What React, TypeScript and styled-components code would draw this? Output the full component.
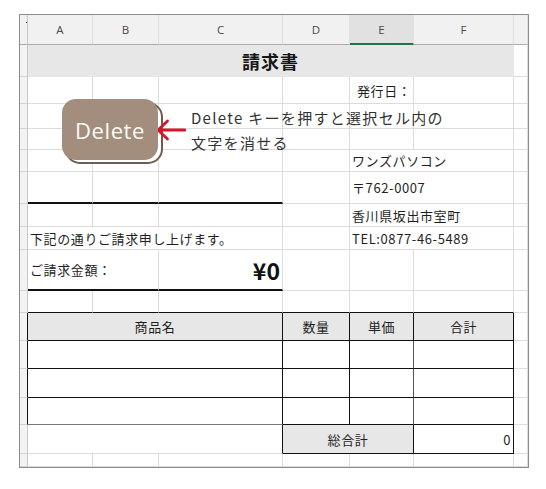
import React from "react";
import styled, { createGlobalStyle } from "styled-components";

const GRID = "#dcdcdc";
const INK = "#1f1f1f";
const SHADE = "#e7e7e7";
const JP = `"Noto Sans CJK JP", "Noto Sans", sans-serif`;

const COLS = [8, 65, 66, 124, 67, 64, 100, 14];
const ROWS = [30, 32, 27, 25, 21, 22, 32, 23, 23, 41, 22, 28, 28, 29, 27, 29, 13];
const LETTERS = ["A", "B", "C", "D", "E", "F", ""];

const GlobalStyle = createGlobalStyle`
    html, body {
        margin: 0;
        background: #ffffff;
    }
`;

const Page = styled.div`
    padding: 14px 0 0 19px;
`;

const Frame = styled.div`
    position: relative;
    width: fit-content;
    border: 1px solid #8c8c8c;
    overflow: hidden;
`;

const Sheet = styled.div`
    display: grid;
    grid-template-columns: ${COLS.map((c) => `${c}px`).join(" ")};
    grid-template-rows: ${ROWS.map((r) => `${r}px`).join(" ")};
    font-family: ${JP};
    font-size: 13px;
    color: ${INK};
`;

const ColHead = styled.div<{ $active?: boolean }>`
    display: flex;
    align-items: center;
    justify-content: center;
    background: ${(p) => (p.$active ? "#e1e1e1" : "#f1f1f1")};
    border-right: 1px solid ${(p) => (p.$active ? "#e1e1e1" : "#dedede")};
    border-bottom: ${(p) => (p.$active ? "2px solid #217346" : "1px solid #ababab")};
    font-family: "Open Sans", "Noto Sans", sans-serif;
    font-size: 11.5px;
    color: #4a4a4a;
`;

const Corner = styled.div`
    position: relative;
    background: #f1f1f1;
    border-right: 1px solid #c8c8c8;
    border-bottom: 1px solid #ababab;

    &::after {
        content: "";
        position: absolute;
        right: 0;
        top: 7px;
        width: 1px;
        height: 1px;
        background: #333;
    }
`;

const RowHead = styled.div<{ $edge?: string }>`
    background: #f3f3f3;
    border-right: 1px solid ${(p) => p.$edge ?? "#c8c8c8"};
    border-bottom: 1px solid #d4d4d4;
`;

interface ICellProps {
    $span?: number;
    $bg?: string;
    $align?: "flex-start" | "center" | "flex-end";
    $right?: string;
    $bottom?: string;
    $pad?: number;
}

const Cell = styled.div<ICellProps>`
    grid-column: span ${(p) => p.$span ?? 1};
    display: flex;
    align-items: center;
    justify-content: ${(p) => p.$align ?? "flex-start"};
    padding: 0 ${(p) => p.$pad ?? 2}px;
    background: ${(p) => p.$bg ?? "transparent"};
    border-right: 1px solid ${(p) => p.$right ?? GRID};
    border-bottom: ${(p) => p.$bottom ?? `1px solid ${GRID}`};
    white-space: nowrap;
    overflow: hidden;
    letter-spacing: 0.6px;
`;

const Title = styled(Cell)`
    font-size: 18px;
    font-weight: 700;
    letter-spacing: 1px;
    color: #161616;
`;

const Amount = styled(Cell)`
    font-size: 23px;
    font-weight: 700;
    letter-spacing: 0;
    color: #111;
`;

const Callout = styled.div`
    position: absolute;
    z-index: 1;
    left: 42px;
    top: 84px;
    display: flex;
    align-items: center;
`;

const Key = styled.div`
    position: relative;
    width: 96px;
    height: 61px;
    display: flex;
    align-items: center;
    justify-content: center;
    border-radius: 14px;
    background: #a38e7d;
    color: #fdfaf5;
    font-family: "Open Sans", "Noto Sans", sans-serif;
    font-size: 22px;
    letter-spacing: 0.6px;

    &::before {
        content: "";
        position: absolute;
        inset: 3px -5px -4px 3px;
        border: 2px solid #6f5e4f;
        border-radius: 15px;
        background: #ffffff;
        z-index: -1;
    }
`;

const Note = styled.div`
    margin-left: 5px;
    font-family: ${JP};
    font-size: 15px;
    line-height: 25px;
    color: #333;
    letter-spacing: 1.3px;
`;

const Arrow = () => (
    <svg width="30" height="22" viewBox="0 0 30 22" style={{ marginLeft: -2 }}>
        <g fill="none" stroke="#d4162a" strokeWidth="2.8" strokeLinecap="round" strokeLinejoin="round">
            <path d="M2 11 H29" />
            <path d="M11.5 2 L2 11 L11.5 20" />
        </g>
    </svg>
);

const BLACK = "#111";
const THICK = `2px solid ${BLACK}`;
const LINE = `1px solid ${BLACK}`;

const blanks = (n: number, props: ICellProps = {}) =>
    Array.from({ length: n }, (_, i) => <Cell key={`b${i}`} {...props} />);

export default function App() {
    return (
        <>
            <GlobalStyle />
            <Page>
                <Frame>
                    <Sheet>
                        {/* column headings */}
                        <Corner />
                        {LETTERS.map((l) => (
                            <ColHead key={l || "g"} $active={l === "E"}>{l}</ColHead>
                        ))}

                        {/* 1: title */}
                        <RowHead />
                        <Title $span={6} $bg={SHADE} $align="center" $right={SHADE} $bottom={`1px solid ${SHADE}`}>請求書</Title>
                        <Cell />

                        {/* 2 */}
                        <RowHead />
                        {blanks(4)}
                        <Cell $pad={7}>発行日：</Cell>
                        <Cell />
                        <Cell />

                        {/* 3, 4 */}
                        <RowHead />
                        {blanks(7)}
                        <RowHead />
                        {blanks(7)}

                        {/* 5 */}
                        <RowHead />
                        {blanks(4)}
                        <Cell $span={2}>ワンズパソコン</Cell>
                        <Cell />

                        {/* 6 */}
                        <RowHead />
                        <Cell $bottom={THICK} />
                        <Cell $bottom={THICK} />
                        <Cell $bottom={THICK} />
                        <Cell />
                        <Cell $span={2}>〒762-0007</Cell>
                        <Cell />

                        {/* 7 */}
                        <RowHead />
                        {blanks(4)}
                        <Cell $span={2}>香川県坂出市室町</Cell>
                        <Cell />

                        {/* 8 */}
                        <RowHead />
                        <Cell $span={3}>下記の通りご請求申し上げます。</Cell>
                        <Cell />
                        <Cell $span={2}>TEL:0877-46-5489</Cell>
                        <Cell />

                        {/* 9 */}
                        <RowHead />
                        <Cell $span={2} $bottom={THICK}>ご請求金額：</Cell>
                        <Amount $align="flex-end" $bottom={THICK}>¥0</Amount>
                        {blanks(4)}

                        {/* 10 */}
                        <RowHead />
                        {blanks(6, { $bottom: LINE })}
                        <Cell />

                        {/* 11: table heading */}
                        <RowHead $edge={BLACK} />
                        <Cell $span={3} $bg={SHADE} $align="center" $right={BLACK} $bottom={LINE}>商品名</Cell>
                        <Cell $bg={SHADE} $align="center" $right={BLACK} $bottom={LINE}>数量</Cell>
                        <Cell $bg={SHADE} $align="center" $right={BLACK} $bottom={LINE}>単価</Cell>
                        <Cell $bg={SHADE} $align="center" $right={BLACK} $bottom={LINE}>合計</Cell>
                        <Cell />

                        {/* 12 - 14: item rows */}
                        {[0, 1, 2].map((r) => (
                            <React.Fragment key={r}>
                                <RowHead $edge={BLACK} />
                                <Cell $span={3} $right={BLACK} $bottom={r === 2 ? "1px solid #777" : LINE} />
                                <Cell $right={BLACK} $bottom={LINE} />
                                <Cell $right="#555" $bottom={LINE} />
                                <Cell $right={BLACK} $bottom={LINE} />
                                <Cell />
                            </React.Fragment>
                        ))}

                        {/* 15: total */}
                        <RowHead />
                        <Cell $span={3} $right={BLACK} />
                        <Cell $span={2} $bg={SHADE} $align="center" $right={BLACK} $bottom={LINE}>総合計</Cell>
                        <Cell $align="flex-end" $right={BLACK} $bottom={LINE}>0</Cell>
                        <Cell />

                        {/* 16 */}
                        <RowHead />
                        {blanks(7)}
                    </Sheet>

                    <Callout>
                        <Key>Delete</Key>
                        <Arrow />
                        <Note>
                            Delete キーを押すと選択セル内の
                            <br />
                            文字を消せる
                        </Note>
                    </Callout>
                </Frame>
            </Page>
        </>
    );
}
